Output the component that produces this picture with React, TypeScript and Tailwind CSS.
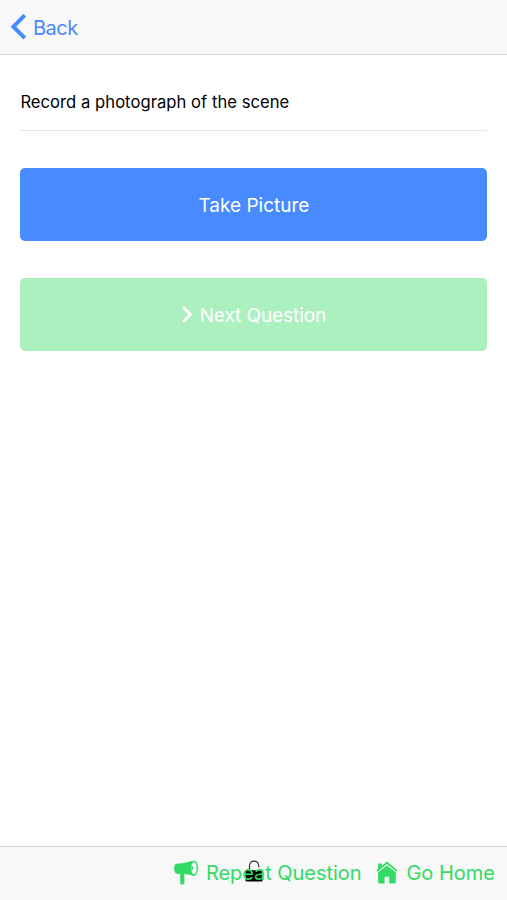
import React, { useState } from 'react';

const BackIcon: React.FC = () => (
    <svg viewBox="0 0 16 28" className="w-4 h-7 shrink-0" fill="none" stroke="#488aff" strokeWidth="4">
        <path d="M14.8 2.2 3.4 13.7 14.8 25.2" />
    </svg>
);

const ForwardIcon: React.FC = () => (
    <svg viewBox="0 0 12 18" className="w-3 h-[18px] shrink-0" fill="none" stroke="currentColor" strokeWidth="3">
        <path d="M2.2 1.2 9.3 8.5 2.2 15.8" />
    </svg>
);

const MegaphoneIcon: React.FC = () => (
    <svg viewBox="0 0 26 26" className="w-[26px] h-[26px] shrink-0" fill="currentColor">
        <path d="M3.4 3.8C8 3.8 13 2.8 19.5 .8C17 5 17 11.5 20.2 15.8C16.5 14.6 13.2 14.2 10.8 14.2L11.4 15.6V23Q11.4 24.6 9.8 24.6H8.8Q7.2 24.6 7.2 23V14L4 13.8C.2 13.2.2 4.2 3.4 3.8Z" />
        <path fillRule="evenodd" d="M20.8 .8C23.6 .8 25 4.3 25 8.2S23.6 15.8 21 15.8C18 15.8 16.3 12 16.3 8.2S18 .8 20.8 .8ZM21.1 2.3C19.4 2.3 18.3 5 18.3 8.2S19.4 14.2 21.1 14.2C22.9 14.2 23.6 11.4 23.6 8.2S22.9 2.3 21.1 2.3Z" />
        <path d="M18.3 6.2C20.9 6 20.9 10.3 18.3 10Z" />
    </svg>
);

const HomeIcon: React.FC = () => (
    <svg viewBox="0 0 24 24" className="w-6 h-6 shrink-0" fill="currentColor">
        <path d="M12 4.4 20.8 11.5V21.1Q20.8 22.6 19.3 22.6H14.2V15.8H9.6V22.6H4.6Q3.1 22.6 3.1 21.1V11.5Z" />
        <path d="M12 .6 22.6 9.6 21.6 10.7 12 3 2.4 10.7 1.4 9.6 3.1 8V2.4H6.7V5Z" />
    </svg>
);

const LockIcon: React.FC = () => (
    <svg viewBox="0 0 18 22" className="absolute left-[39px] top-[2px] w-[18px] h-[22px]" fill="none">
        <path d="M4.5 11V6C4.5 2.7 6.4 1.2 9 1.2C11.8 1.2 13.7 3 13.7 5.7V7.3" stroke="#333" strokeWidth="1.2" />
        <rect x="0.5" y="10.2" width="17" height="11.3" rx="1" fill="#000" />
    </svg>
);

const App: React.FC = () => {
    const [hasPicture, setHasPicture] = useState(false);

    return (
        <div className="flex flex-col h-screen bg-white font-['Inter',sans-serif]">
            <header className="h-[55px] shrink-0 flex items-center pl-[10px] bg-[#f8f8f8] border-b border-[#dadada]">
                <button className="flex items-center gap-[7px] text-[#488aff]">
                    <BackIcon />
                    <span className="pt-px text-[20px] tracking-[-0.5px] whitespace-nowrap">Back</span>
                </button>
            </header>

            <main className="flex-1 pl-[20.4px] pr-[19.6px]">
                <div className="h-[76px] pt-[35px] border-b border-[#e6e6e6]">
                    <p className="text-[16.6px] leading-[25px] tracking-[0.04px] text-black whitespace-nowrap">Record a photograph of the scene</p>
                </div>

                <button
                    onClick={() => setHasPicture(true)}
                    className="mt-[37px] w-full h-[73px] flex items-center justify-center rounded-[5px] bg-[#488aff] text-white text-[19px]"
                >
                    <span className="pt-[3px]">Take Picture</span>
                </button>

                <button
                    disabled={!hasPicture}
                    className="mt-[37px] w-full h-[73px] flex items-center justify-center gap-[7px] pr-px rounded-[5px] bg-[#32db64] disabled:opacity-40 text-white text-[19px]"
                >
                    <ForwardIcon />
                    <span className="pt-[3px] tracking-[-0.08px]">Next Question</span>
                </button>
            </main>

            <footer className="h-[54px] shrink-0 flex items-center justify-end gap-[14px] pr-3 pb-[2px] bg-[#f8f8f8] border-t border-[#d6d6d6] text-[#32db64] text-[20px]">
                <button className="flex items-center gap-[7px]">
                    <MegaphoneIcon />
                    <span className="relative whitespace-nowrap tracking-[-0.05px]">
                        <LockIcon />
                        <span className="relative">Repeat Question</span>
                    </span>
                </button>
                <button className="flex items-center gap-[7px]">
                    <HomeIcon />
                    <span className="whitespace-nowrap">Go Home</span>
                </button>
            </footer>
        </div>
    );
};

export default App;
